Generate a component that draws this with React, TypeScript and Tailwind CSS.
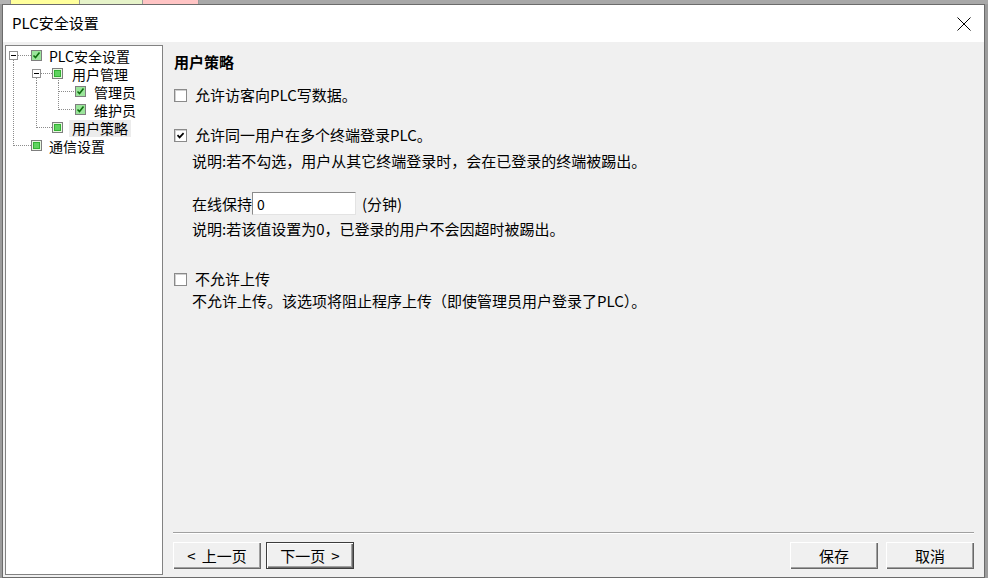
import type React from "react";

const dotted = { stroke: "#8c8c8c", strokeDasharray: "1 1" };

function V({ x, y1, y2 }: { x: number; y1: number; y2: number }) {
	return <line x1={x} y1={y1} x2={x} y2={y2} {...dotted} />;
}

function H({ x1, x2 }: { x1: number; x2: number }) {
	return <line x1={x1} y1={8.5} x2={x2} y2={8.5} {...dotted} />;
}

function Expander({ x }: { x: number }) {
	return (
		<g>
			<rect x={x + 0.5} y={4.5} width={8} height={8} fill="#fff" stroke="#919191" />
			<line x1={x + 2} y1={8.5} x2={x + 7} y2={8.5} stroke="#000" />
		</g>
	);
}

function TreeCheck({ x, checked }: { x: number; checked?: boolean }) {
	return (
		<g>
			<rect x={x + 0.5} y={3.5} width={10} height={10} fill={checked ? "#9be59b" : "#e6f7df"} stroke="#7e7e7e" />
			{checked ? (
				<path d={`M${x + 2.5} ${8.5} L${x + 4.5} ${10.5} L${x + 8.5} ${5.5}`} fill="none" stroke="#0e6e0e" strokeWidth={1.6} />
			) : (
				<rect x={x + 2.5} y={5.5} width={6} height={6} fill="#5fd35f" stroke="#33b033" />
			)}
		</g>
	);
}

type RowProps = {
	width: number;
	label: string;
	selected?: boolean;
	children: React.ReactNode;
};

function TreeRow({ width, label, selected, children }: RowProps) {
	return (
		<div className="flex h-[18px] items-center">
			<svg width={width} height={18} className="shrink-0">
				{children}
			</svg>
			<span className={`px-[3px] leading-[17px] ${selected ? "bg-[#ececec]" : ""}`}>{label}</span>
		</div>
	);
}

function Tree() {
	return (
		<div className="flex w-[158px] shrink-0 flex-col border border-[#828282] bg-white pl-[1px] pt-[1px] text-[14px]">
			<TreeRow width={39} label="PLC安全设置">
				<Expander x={2} />
				<V x={6.5} y1={13} y2={18} />
				<H x1={11} x2={24} />
				<TreeCheck x={24} checked />
			</TreeRow>
			<TreeRow width={62} label="用户管理">
				<V x={6.5} y1={0} y2={18} />
				<Expander x={25} />
				<V x={29.5} y1={13} y2={18} />
				<H x1={34} x2={45} />
				<TreeCheck x={45} />
				<V x={51.5} y1={15} y2={18} />
			</TreeRow>
			<TreeRow width={84} label="管理员">
				<V x={6.5} y1={0} y2={18} />
				<V x={29.5} y1={0} y2={18} />
				<V x={51.5} y1={0} y2={18} />
				<H x1={52} x2={68} />
				<TreeCheck x={68} checked />
			</TreeRow>
			<TreeRow width={84} label="维护员">
				<V x={6.5} y1={0} y2={18} />
				<V x={29.5} y1={0} y2={18} />
				<V x={51.5} y1={0} y2={9} />
				<H x1={52} x2={68} />
				<TreeCheck x={68} checked />
			</TreeRow>
			<TreeRow width={62} label="用户策略" selected>
				<V x={6.5} y1={0} y2={18} />
				<V x={29.5} y1={0} y2={9} />
				<H x1={30} x2={45} />
				<TreeCheck x={45} />
			</TreeRow>
			<TreeRow width={39} label="通信设置">
				<V x={6.5} y1={0} y2={9} />
				<H x1={7} x2={24} />
				<TreeCheck x={24} />
			</TreeRow>
		</div>
	);
}

function Box({ checked }: { checked?: boolean }) {
	return (
		<span className="flex h-[13px] w-[13px] shrink-0 items-center justify-center border border-[#8a8a8a] bg-white shadow-[inset_1px_1px_0_#d0d0d0]">
			{checked && (
				<svg width="9" height="9" viewBox="0 0 9 9">
					<path d="M1.5 4.2 L3.6 6.4 L7.6 2.2" fill="none" stroke="#000" strokeWidth="1.7" />
				</svg>
			)}
		</span>
	);
}

function CheckRow({ checked, label, className }: { checked?: boolean; label: string; className?: string }) {
	return (
		<div className={`flex h-[20px] items-center pl-[1px] ${className ?? ""}`}>
			<Box checked={checked} />
			<span className="ml-[8px]">{label}</span>
		</div>
	);
}

function Btn({ children, primary }: { children: React.ReactNode; primary?: boolean }) {
	return (
		<button
			className={`flex h-[27px] w-[88px] items-center justify-center bg-[#f0f0f0] text-[15px] ${
				primary
					? "border border-[#3c3c3c] shadow-[inset_1px_1px_0_#fff,inset_-1px_-1px_0_#696969,inset_-2px_-2px_0_#a0a0a0]"
					: "shadow-[inset_1px_1px_0_#fff,inset_-1px_-1px_0_#696969,inset_-2px_-2px_0_#a0a0a0]"
			}`}
		>
			{children}
		</button>
	);
}

export default function App() {
	return (
		<div className="flex h-[578px] w-[988px] flex-col overflow-hidden bg-[#9c9c9c] font-['Noto_Sans_CJK_SC','Noto_Sans',sans-serif] text-black">
			<div className="flex h-[4px] shrink-0">
				<div className="w-[10px] bg-[#b4b4b4]" />
				<div className="w-[70px] border-x border-[#9a9a9a] bg-[#ffff9c]" />
				<div className="w-[63px] border-r border-[#9a9a9a] bg-[#e6f3c9]" />
				<div className="w-[56px] border-r border-[#9a9a9a] bg-[#ffc4c4]" />
				<div className="flex-1 bg-[#a8a8a8]" />
			</div>
			<div className="flex flex-1 pl-[2px] pr-[3px]">
				<div className="flex flex-1 flex-col border border-[#6b6b6b] bg-[#f0f0f0]">
					<div className="flex h-[37px] shrink-0 items-center justify-between bg-white pl-[9px] pr-[13px]">
						<span className="text-[15px]">PLC安全设置</span>
						<svg width="14" height="14" viewBox="0 0 14 14">
							<path d="M0.5 0.5 L13.5 13.5 M13.5 0.5 L0.5 13.5" stroke="#000" strokeWidth="1" />
						</svg>
					</div>
					<div className="flex flex-1 pb-[2px] pl-[2px] pt-[3px]">
						<Tree />
						<div className="flex flex-1 flex-col pb-[6px] pl-[10px] pr-[10px] text-[15px] leading-[20px]">
							<div className="mt-[7px] pl-[1px] font-bold">用户策略</div>
							<CheckRow className="mt-[13px]" label="允许访客向PLC写数据。" />
							<CheckRow className="mt-[20px]" checked label="允许同一用户在多个终端登录PLC。" />
							<div className="mt-[6px] pl-[19px]">说明:若不勾选，用户从其它终端登录时，会在已登录的终端被踢出。</div>
							<div className="mt-[21px] flex h-[23px] items-center pl-[19px]">
								<span>在线保持</span>
								<div className="flex h-[23px] w-[104px] items-center border border-b-[#e3e3e3] border-l-[#8a8a8a] border-r-[#e3e3e3] border-t-[#8a8a8a] bg-white pl-[4px] text-[14px]">
									0
								</div>
								<span className="ml-[6px]">(分钟)</span>
							</div>
							<div className="mt-[4px] pl-[19px]">说明:若该值设置为0，已登录的用户不会因超时被踢出。</div>
							<CheckRow className="mt-[30px]" label="不允许上传" />
							<div className="mt-[2px] pl-[19px]">不允许上传。该选项将阻止程序上传（即使管理员用户登录了PLC）。</div>
							<div className="flex-1" />
							<div className="h-[2px] border-b border-t border-b-white border-t-[#a0a0a0]" />
							<div className="mt-[8px] flex h-[27px]">
								<Btn>
									<span className="mr-[6px]">&lt;</span>上一页
								</Btn>
								<div className="ml-[5px]">
									<Btn primary>
										下一页<span className="ml-[6px]">&gt;</span>
									</Btn>
								</div>
								<div className="ml-auto flex gap-[8px]">
									<Btn>保存</Btn>
									<Btn>取消</Btn>
								</div>
							</div>
						</div>
					</div>
				</div>
			</div>
		</div>
	);
}
